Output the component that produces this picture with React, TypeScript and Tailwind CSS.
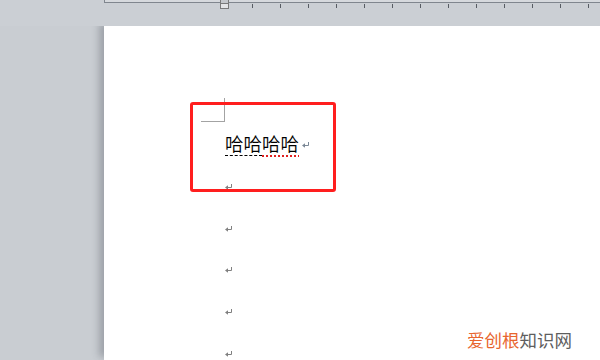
import React from "react";

function ReturnMark({ color = "#808080" }: { color?: string }) {
  return (
    <svg width="8" height="6" viewBox="0 0 8 6" className="block">
      <path d="M6.5 0 V3.5 H2" stroke={color} strokeWidth="1" fill="none" />
      <path d="M0 3.5 L3 1.2 L3 5.8 Z" fill={color} />
    </svg>
  );
}

export default function App() {
  const ticks = Array.from({ length: 13 });
  const marks = Array.from({ length: 5 });
  return (
    <div
      className="relative w-[600px] h-[360px] overflow-hidden bg-[#c9cdd2] flex flex-col"
      style={{ fontFamily: '"Noto Sans CJK SC", "Noto Sans", sans-serif' }}
    >
      {/* ruler */}
      <div className="relative h-[26px] shrink-0 pl-[104px] bg-[#cbcfd4]">
        <div className="h-[3px] bg-[#d6d9dd] border-l border-b border-[#80868e]" />
        <div className="flex gap-[27px] pl-[148px] mt-[1px]">
          {ticks.map((_, i) => (
            <div key={i} className="w-px h-[4px] bg-[#575c63]" />
          ))}
        </div>
        <div className="absolute left-[220px] top-0 w-[9px] h-[9px] flex flex-col">
          <div className="h-[3px] border-x border-[#7a7a7a] bg-[#c4c7cb]" />
          <div className="h-[6px] border border-[#7a7a7a] bg-[#e4e5e7]" />
        </div>
      </div>

      {/* page */}
      <div className="flex-1 ml-[104px] bg-white shadow-[-5px_-3px_7px_rgba(60,65,75,0.3)] flex flex-col">
        <div className="ml-[97px] mt-[72px] w-[24px] h-[24px] border-r border-b border-[#a3a3a3]" />
        <div className="ml-[121px] mt-[9px] h-[24px] flex items-center text-[18.5px] leading-[24px] text-black font-[350]">
          <span className="underline decoration-dashed decoration-black decoration-[1px] underline-offset-[4px]">哈哈</span>
          <span className="underline decoration-dotted decoration-[#e02020] underline-offset-[4px] decoration-[1.5px]">哈哈</span>
          <span className="ml-[3px] mt-[3px]">
            <ReturnMark color="#7b8896" />
          </span>
        </div>
        <div className="ml-[121px] mt-[29px] flex flex-col gap-[35.7px]">
          {marks.map((_, i) => (
            <div key={i} className="h-[6px]">
              <ReturnMark />
            </div>
          ))}
        </div>
      </div>

      {/* annotation box */}
      <div className="absolute left-[190px] top-[102px] w-[146px] h-[90px] border-[3px] border-[#ff1e1e] rounded-[3px]" />

      {/* watermark */}
      <div className="absolute left-[467px] top-[331px] text-[17.5px] leading-none whitespace-nowrap">
        <span className="text-[#e8652e]">爱创根</span>
        <span className="text-[#5e5e5e]">知识网</span>
      </div>
    </div>
  );
}
